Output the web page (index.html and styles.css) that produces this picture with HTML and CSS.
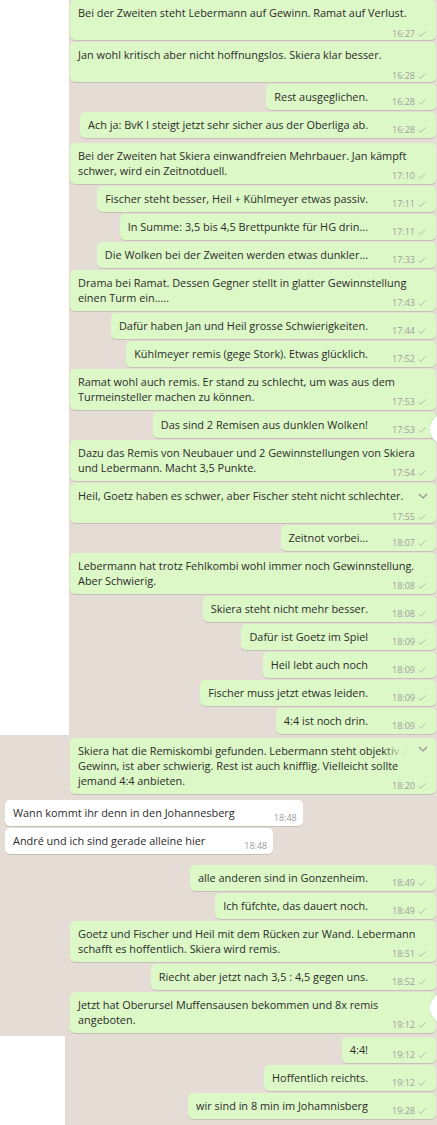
FILE: index.html
```html
<!DOCTYPE html>
<html lang="de">
<head>
<meta charset="utf-8">
<title>Chat</title>
<link rel="stylesheet" href="styles.css">
</head>
<body>
<div class="seg seg-a">
  <div class="msg wide full"><span class="txt">Bei der Zweiten steht Lebermann auf Gewinn. Ramat auf Verlust.</span><span class="time">16:27<svg class="tick" viewBox="0 0 12 9"><path d="M1 5 L4.2 8 L11 1"/></svg></span></div>
  <div class="msg wide full"><span class="txt">Jan wohl kritisch aber nicht hoffnungslos. Skiera klar besser.</span><span class="time">16:28<svg class="tick" viewBox="0 0 12 9"><path d="M1 5 L4.2 8 L11 1"/></svg></span></div>
  <div class="msg"><span class="txt">Rest ausgeglichen.</span><span class="time">16:28<svg class="tick" viewBox="0 0 12 9"><path d="M1 5 L4.2 8 L11 1"/></svg></span></div>
  <div class="msg"><span class="txt">Ach ja: BvK I steigt jetzt sehr sicher aus der Oberliga ab.</span><span class="time">16:28<svg class="tick" viewBox="0 0 12 9"><path d="M1 5 L4.2 8 L11 1"/></svg></span></div>
  <div class="msg full mt3"><span class="txt">Bei der Zweiten hat Skiera einwandfreien Mehrbauer. Jan kämpft<br>schwer, wird ein Zeitnotduell.</span><span class="time">17:10<svg class="tick" viewBox="0 0 12 9"><path d="M1 5 L4.2 8 L11 1"/></svg></span></div>
  <div class="msg"><span class="txt">Fischer steht besser, Heil + Kühlmeyer etwas passiv.</span><span class="time">17:11<svg class="tick" viewBox="0 0 12 9"><path d="M1 5 L4.2 8 L11 1"/></svg></span></div>
  <div class="msg"><span class="txt">In Summe: 3,5 bis 4,5 Brettpunkte für HG drin...</span><span class="time">17:11<svg class="tick" viewBox="0 0 12 9"><path d="M1 5 L4.2 8 L11 1"/></svg></span></div>
  <div class="msg"><span class="txt">Die Wolken bei der Zweiten werden etwas dunkler...</span><span class="time">17:33<svg class="tick" viewBox="0 0 12 9"><path d="M1 5 L4.2 8 L11 1"/></svg></span></div>
  <div class="msg full"><span class="txt">Drama bei Ramat. Dessen Gegner stellt in glatter Gewinnstellung<br>einen Turm ein.....</span><span class="time">17:43<svg class="tick" viewBox="0 0 12 9"><path d="M1 5 L4.2 8 L11 1"/></svg></span></div>
  <div class="msg"><span class="txt">Dafür haben Jan und Heil grosse Schwierigkeiten.</span><span class="time">17:44<svg class="tick" viewBox="0 0 12 9"><path d="M1 5 L4.2 8 L11 1"/></svg></span></div>
  <div class="msg"><span class="txt">Kühlmeyer remis (gege Stork). Etwas glücklich.</span><span class="time">17:52<svg class="tick" viewBox="0 0 12 9"><path d="M1 5 L4.2 8 L11 1"/></svg></span></div>
  <div class="msg full"><span class="txt">Ramat wohl auch remis. Er stand zu schlecht, um was aus dem<br>Turmeinsteller machen zu können.</span><span class="time">17:53<svg class="tick" viewBox="0 0 12 9"><path d="M1 5 L4.2 8 L11 1"/></svg></span></div>
  <div class="msg"><span class="txt">Das sind 2 Remisen aus dunklen Wolken!</span><span class="time">17:53<svg class="tick" viewBox="0 0 12 9"><path d="M1 5 L4.2 8 L11 1"/></svg></span></div>
  <div class="msg full"><span class="txt">Dazu das Remis von Neubauer und 2 Gewinnstellungen von Skiera<br>und Lebermann. Macht 3,5 Punkte.</span><span class="time">17:54<svg class="tick" viewBox="0 0 12 9"><path d="M1 5 L4.2 8 L11 1"/></svg></span></div>
  <div class="msg wide full"><span class="txt">Heil, Goetz haben es schwer, aber Fischer steht nicht schlechter.</span><span class="time">17:55<svg class="tick" viewBox="0 0 12 9"><path d="M1 5 L4.2 8 L11 1"/></svg></span><span class="menu"><svg class="chev" viewBox="0 0 10 6"><path d="M1 1 L5 5 L9 1"/></svg></span></div>
  <div class="msg"><span class="txt">Zeitnot vorbei...</span><span class="time">18:07<svg class="tick" viewBox="0 0 12 9"><path d="M1 5 L4.2 8 L11 1"/></svg></span></div>
  <div class="msg full"><span class="txt">Lebermann hat trotz Fehlkombi wohl immer noch Gewinnstellung.<br>Aber Schwierig.</span><span class="time">18:08<svg class="tick" viewBox="0 0 12 9"><path d="M1 5 L4.2 8 L11 1"/></svg></span></div>
  <div class="msg"><span class="txt">Skiera steht nicht mehr besser.</span><span class="time">18:08<svg class="tick" viewBox="0 0 12 9"><path d="M1 5 L4.2 8 L11 1"/></svg></span></div>
  <div class="msg"><span class="txt">Dafür ist Goetz im Spiel</span><span class="time">18:09<svg class="tick" viewBox="0 0 12 9"><path d="M1 5 L4.2 8 L11 1"/></svg></span></div>
  <div class="msg"><span class="txt">Heil lebt auch noch</span><span class="time">18:09<svg class="tick" viewBox="0 0 12 9"><path d="M1 5 L4.2 8 L11 1"/></svg></span></div>
  <div class="msg"><span class="txt">Fischer muss jetzt etwas leiden.</span><span class="time">18:09<svg class="tick" viewBox="0 0 12 9"><path d="M1 5 L4.2 8 L11 1"/></svg></span></div>
  <div class="msg"><span class="txt">4:4 ist noch drin.</span><span class="time">18:09<svg class="tick" viewBox="0 0 12 9"><path d="M1 5 L4.2 8 L11 1"/></svg></span></div>
</div>
<div class="seg seg-b">
  <div class="msg full"><span class="txt">Skiera hat die Remiskombi gefunden. Lebermann steht objektiv auf<br>Gewinn, ist aber schwierig. Rest ist auch knifflig. Vielleicht sollte<br>jemand 4:4 anbieten.</span><span class="time">18:20<svg class="tick" viewBox="0 0 12 9"><path d="M1 5 L4.2 8 L11 1"/></svg></span><span class="menu fade"><svg class="chev" viewBox="0 0 10 6"><path d="M1 1 L5 5 L9 1"/></svg></span></div>
  <div class="msg in mt4"><span class="txt">Wann kommt ihr denn in den Johannesberg</span><span class="time">18:48</span></div>
  <div class="msg in"><span class="txt">André und ich sind gerade alleine hier</span><span class="time">18:48</span></div>
  <div class="msg mt9"><span class="txt">alle anderen sind in Gonzenheim.</span><span class="time">18:49<svg class="tick" viewBox="0 0 12 9"><path d="M1 5 L4.2 8 L11 1"/></svg></span></div>
  <div class="msg"><span class="txt">Ich füfchte, das dauert noch.</span><span class="time">18:49<svg class="tick" viewBox="0 0 12 9"><path d="M1 5 L4.2 8 L11 1"/></svg></span></div>
  <div class="msg full"><span class="txt">Goetz und Fischer und Heil mit dem Rücken zur Wand. Lebermann<br>schafft es hoffentlich. Skiera wird remis.</span><span class="time">18:51<svg class="tick" viewBox="0 0 12 9"><path d="M1 5 L4.2 8 L11 1"/></svg></span></div>
  <div class="msg"><span class="txt">Riecht aber jetzt nach 3,5 : 4,5 gegen uns.</span><span class="time">18:52<svg class="tick" viewBox="0 0 12 9"><path d="M1 5 L4.2 8 L11 1"/></svg></span></div>
  <div class="msg full"><span class="txt">Jetzt hat Oberursel Muffensausen bekommen und 8x remis<br>angeboten.</span><span class="time">19:12<svg class="tick" viewBox="0 0 12 9"><path d="M1 5 L4.2 8 L11 1"/></svg></span></div>
</div>
<div class="seg seg-c">
  <div class="msg"><span class="txt">4:4!</span><span class="time">19:12<svg class="tick" viewBox="0 0 12 9"><path d="M1 5 L4.2 8 L11 1"/></svg></span></div>
  <div class="msg"><span class="txt">Hoffentlich reichts.</span><span class="time">19:12<svg class="tick" viewBox="0 0 12 9"><path d="M1 5 L4.2 8 L11 1"/></svg></span></div>
  <div class="msg"><span class="txt">wir sind in 8 min im Johamnisberg</span><span class="time">19:28<svg class="tick" viewBox="0 0 12 9"><path d="M1 5 L4.2 8 L11 1"/></svg></span></div>
</div>
<div class="fab fab-1"><span class="fab-dot"></span></div>
<div class="fab fab-2"><span class="fab-dot"></span></div>
</body>
</html>
```
FILE: styles.css
```css
html, body {
  margin: 0;
  padding: 0;
}
body {
  width: 437px;
  height: 1125px;
  background: #ffffff;
  display: flex;
  flex-direction: column;
  position: relative;
  overflow: hidden;
  font-family: "Open Sans", "Noto Sans", sans-serif;
  color: #2b2b2b;
}
.seg {
  background: #e5ddd5;
  display: flex;
  flex-direction: column;
  align-items: flex-end;
  gap: 2px;
  padding: 0 1px;
}
.seg-a {
  margin-left: 69px;
  padding-bottom: 1px;
}
.seg-b {
  padding-top: 3px;
  padding-bottom: 3px;
}
.seg-c {
  margin-left: 65px;
  padding-top: 1px;
  flex: 1;
}
.msg {
  position: relative;
  display: flex;
  align-items: flex-end;
  box-sizing: border-box;
  padding: 5px 10px 6px 8px;
  background: #dcf8c6;
  border-radius: 5px;
  box-shadow: 0 1px 0.5px rgba(0, 0, 0, 0.13);
  font-size: 10.9px;
  line-height: 15px;
}
.txt {
  flex: 1 1 auto;
  min-width: 0;
  white-space: nowrap;
}
.time {
  flex: none;
  width: 58px;
  display: flex;
  justify-content: flex-end;
  align-items: center;
  font-size: 9px;
  line-height: 11px;
  margin-bottom: -3px;
  color: #9d9d9d;
}
.tick {
  width: 8px;
  height: 6px;
  margin-left: 3px;
  fill: none;
  stroke: #a3a3a3;
  stroke-width: 1.1;
}
.full {
  width: 366px;
}
.wide {
  display: block;
}
.wide .txt {
  display: block;
}
.wide .time {
  margin-left: auto;
  margin-top: 8px;
  margin-bottom: -5px;
}
.menu {
  position: absolute;
  top: 7px;
  right: 8px;
  display: flex;
  align-items: center;
  justify-content: flex-end;
  height: 12px;
}
.menu.fade {
  top: 5px;
  right: 0;
  width: 46px;
  padding-right: 8px;
  border-radius: 0 5px 0 0;
  background: linear-gradient(to right, rgba(220, 248, 198, 0) 0, rgba(220, 248, 198, 0.9) 20px, #dcf8c6 26px);
}
.chev {
  width: 10px;
  height: 6px;
  fill: none;
  stroke: #8e8e8e;
  stroke-width: 1.1;
}
.in {
  align-self: flex-start;
  margin-left: 4px;
  background: #ffffff;
  padding-right: 6px;
}
.in .time {
  width: 62px;
}
.mt3 { margin-top: 3px; }
.mt4 { margin-top: 4px; }
.mt9 { margin-top: 9px; }
.fab {
  position: absolute;
  right: 0;
  width: 7px;
  height: 34px;
  overflow: hidden;
}
.fab-dot {
  display: block;
  width: 32px;
  height: 32px;
  margin-top: 1px;
  border-radius: 50%;
  background: #ffffff;
  box-shadow: 0 0 2px rgba(0, 0, 0, 0.18);
}
.fab-1 { top: 412px; }
.fab-2 { top: 991px; }
```
